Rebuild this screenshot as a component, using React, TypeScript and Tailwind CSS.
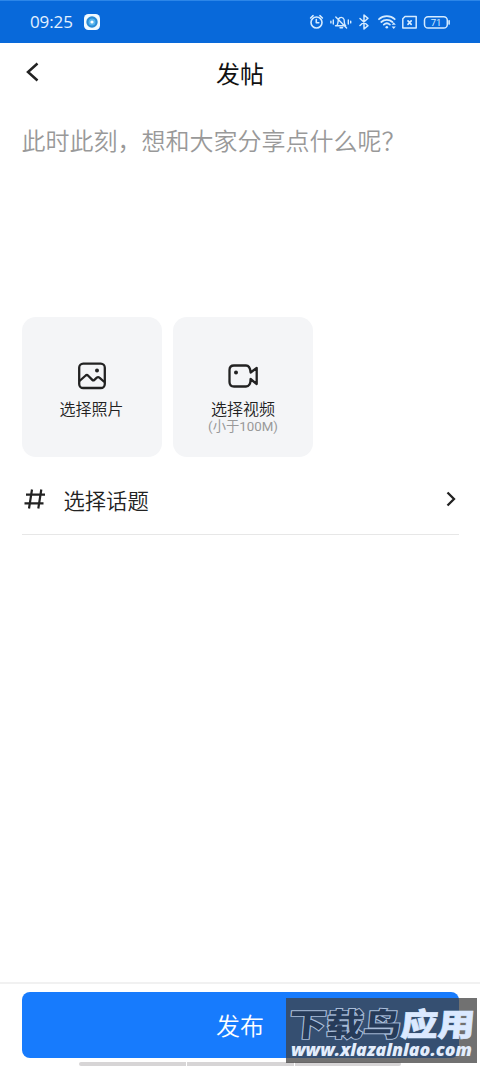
import React from "react";

function StatusIcons() {
  return (
    <svg width="144" height="20" viewBox="0 0 144 20" fill="none" stroke="#d5ebff" strokeWidth="1.6" strokeLinecap="round" strokeLinejoin="round">
      <circle cx="8.5" cy="10.5" r="5.5" />
      <path d="M8.3 7.5v3.3h2.5M2.6 6l2.5-2.3M14.4 6l-2.5-2.3" />
      <path d="M27.5 13.8h10.2M29 13.4c1.4-1.6.7-4 1.5-6 1-2.7 4.6-2.7 5.5 0 .6 2-.2 4.2 1.4 6M32 15.8h2.6M27.8 5l10.8 11" strokeWidth="1.4" />
      <path d="M25.3 8v4M22.9 9.3v1.6M40.3 8v4M42.7 9.3v1.6" strokeWidth="1.4" />
      <path d="M52 6.5l8 7.2-4 3.3V3l4 3.3-8 7.2" strokeWidth="1.5" />
      <path d="M71 7.2c4.3-4 11.4-4 15.7 0M73.3 10c3.1-2.9 8-2.9 11.1 0M75.8 12.6c1.8-1.6 4.3-1.6 6.1 0" strokeWidth="1.8" />
      <circle cx="78.8" cy="15.2" r="1.3" fill="#d5ebff" stroke="none" />
      <path d="M83.6 12.8l2.1-2.6 2.1 2.6zM83.6 14.4l2.1 2.6 2.1-2.6z" fill="#d5ebff" stroke="none" />
      <path d="M97 4.5h11.200v11.600H94.800V6.700z" strokeWidth="1.5" />
      <path d="M100 8.900l3.200 3.400M103.200 8.900l-3.200 3.400" strokeWidth="1.7" />
      <rect x="116.5" y="4.700" width="22.800" height="11.400" rx="3.600" strokeWidth="1.5" />
      <path d="M141.100 8.700v3.400" strokeWidth="1.6" />
      <text x="128" y="13.900" textAnchor="middle" fontSize="9.500" fontWeight="400" fill="#d5ebff" stroke="none" fontFamily="Roboto, sans-serif">71</text>
    </svg>
  );
}

function Watermark() {
  return (
    <div className="absolute left-[286px] top-[998px] h-[65px] w-[191px] bg-[rgba(63,63,63,0.74)]">
      <svg width="191" height="65" viewBox="0 0 191 65" fontWeight="900">
        <g transform="translate(2 38) skewX(-5) scale(1 0.88)" fontFamily="'Noto Sans CJK SC', sans-serif" fontSize="36">
          <text x="0" y="0" textLength="112" lengthAdjust="spacingAndGlyphs" fill="#263b59" stroke="#a9bdd9" strokeWidth="2.200" paintOrder="stroke">下载鸟</text>
          <text x="112" y="0" textLength="74" lengthAdjust="spacingAndGlyphs" fill="#dbe9ff" stroke="#dbe9ff" strokeWidth="0.8">应用</text>
        </g>
        <text x="5" y="58" fontSize="18" fontWeight="800" fontStyle="italic" fontFamily="'Open Sans', sans-serif" textLength="181" lengthAdjust="spacingAndGlyphs" fill="#e3edfc">www.xlazalnlao.com</text>
      </svg>
    </div>
  );
}

export default function App() {
  return (
    <div className="relative flex h-[1066px] w-[480px] flex-col overflow-hidden bg-white font-['Noto_Sans_CJK_SC',sans-serif] font-[350] text-[#222]">
      <div className="flex h-[43px] shrink-0 items-center border-t border-[#2c86e8] bg-[#0869da] pl-[30px] pr-[28px]">
        <span className="-mt-[2px] font-['Open_Sans',sans-serif] text-[17px] font-normal leading-none tracking-[-0.1px] text-[#e3f1ff]">09:25</span>
        <svg className="ml-[10px]" width="18" height="18" viewBox="0 0 18 18">
          <rect x="1" y="1" width="16" height="16" rx="4.5" fill="#f1faff" />
          <circle cx="9" cy="9" r="5.7" fill="#298bd5" />
          <circle cx="9" cy="9" r="3.5" fill="#56b5ed" />
          <circle cx="9" cy="9" r="1.6" fill="#fff" />
        </svg>
        <div className="ml-auto"><StatusIcons /></div>
      </div>
      <header className="grid h-[62px] shrink-0 grid-cols-[80px_1fr_80px] items-center">
        <svg className="mb-[4px] ml-[24px]" width="18" height="22" viewBox="0 0 18 22" fill="none" stroke="#222" strokeWidth="2.5">
          <path d="M13.500 2.500L4 11l9.500 8.500" />
        </svg>
        <h1 className="-mt-[2px] text-center text-[24px] font-normal leading-[36px] text-[#111]">发帖</h1>
      </header>
      <main className="flex flex-1 flex-col px-[21.5px]">
        <p className="mt-[17px] h-[195px] whitespace-nowrap text-[24px] leading-[36px] text-[#999]">此时此刻，想和大家分享点什么呢？</p>
        <div className="flex gap-[11.5px]">
          <button className="flex size-[140px] flex-col items-center rounded-[14px] bg-[#f4f5f7] pt-[44px]">
            <svg width="30" height="30" viewBox="0 0 30 30" fill="none" stroke="#222" strokeWidth="2.3" strokeLinejoin="round">
              <rect x="2.2" y="2.7" width="25.6" height="24.3" rx="4" />
              <path d="M2.500 20l6.200-5.500q1.300-1 2.500.2l4.100 4.200q1 1 2.100 0l2.400-2.200q1.300-1.200 2.600 0l5 4.300" />
              <circle cx="20" cy="9.500" r="2" fill="#222" stroke="none" />
            </svg>
            <span className="mt-[6px] text-[16px] leading-[22px]">选择照片</span>
          </button>
          <button className="flex size-[140px] flex-col items-center rounded-[14px] bg-[#f4f5f7] pt-[44px]">
            <svg width="32" height="30" viewBox="0 0 32 30" fill="none" stroke="#222" strokeWidth="2.3" strokeLinejoin="round">
              <path d="M7 4.500h12q4 0 4.600 7l6.100-4.500v16l-6.100-5q0 7.500-4.600 7.500H7q-4.500 0-4.500-4.500V9Q2.500 4.500 7 4.500z" />
              <circle cx="9" cy="11.500" r="2" fill="#222" stroke="none" />
            </svg>
            <span className="mt-[6px] text-[16px] leading-[22px]">选择视频</span>
            <span className="-mt-[1px] font-[Roboto,'Noto_Sans_CJK_SC',sans-serif] text-[13.3px] font-normal leading-[18px] text-[#999]">(小于100M)</span>
          </button>
        </div>
        <div className="flex h-[78px] items-center border-b border-[#e7e7e7]">
          <svg className="ml-[2px] mt-[6px]" width="22" height="22" viewBox="0 0 22 22" fill="none" stroke="#222" strokeWidth="2.2">
            <path d="M8 1.500L5 20.500M17.300 1.500l-3 19M2 6.700h19M.5 15.300h19" />
          </svg>
          <span className="ml-[18px] mt-[8px] text-[21.3px] leading-[32px]">选择话题</span>
          <svg className="ml-auto mr-[1px] mt-[6px]" width="14" height="18" viewBox="0 0 14 18" fill="none" stroke="#222" strokeWidth="2.3">
            <path d="M3.500 2.500L10 9l-6.500 6.500" />
          </svg>
        </div>
      </main>
      <footer className="flex h-[84px] shrink-0 flex-col border-t-2 border-[#f1f1f1] px-[21.5px] pt-[8px]">
        <button className="h-[66px] shrink-0 rounded-[8px] bg-[#177bfd] text-[24px] text-white">发布</button>
        <div className="mx-auto mt-[4px] flex h-[4px] w-[322px] shrink-0 gap-px overflow-hidden rounded-sm">
          <div className="w-[107px] bg-[#d7d5d6]" />
          <div className="w-[107px] bg-[#d7d5d6]" />
          <div className="flex-1 bg-[#d7d5d6]" />
        </div>
      </footer>
      <Watermark />
    </div>
  );
}
